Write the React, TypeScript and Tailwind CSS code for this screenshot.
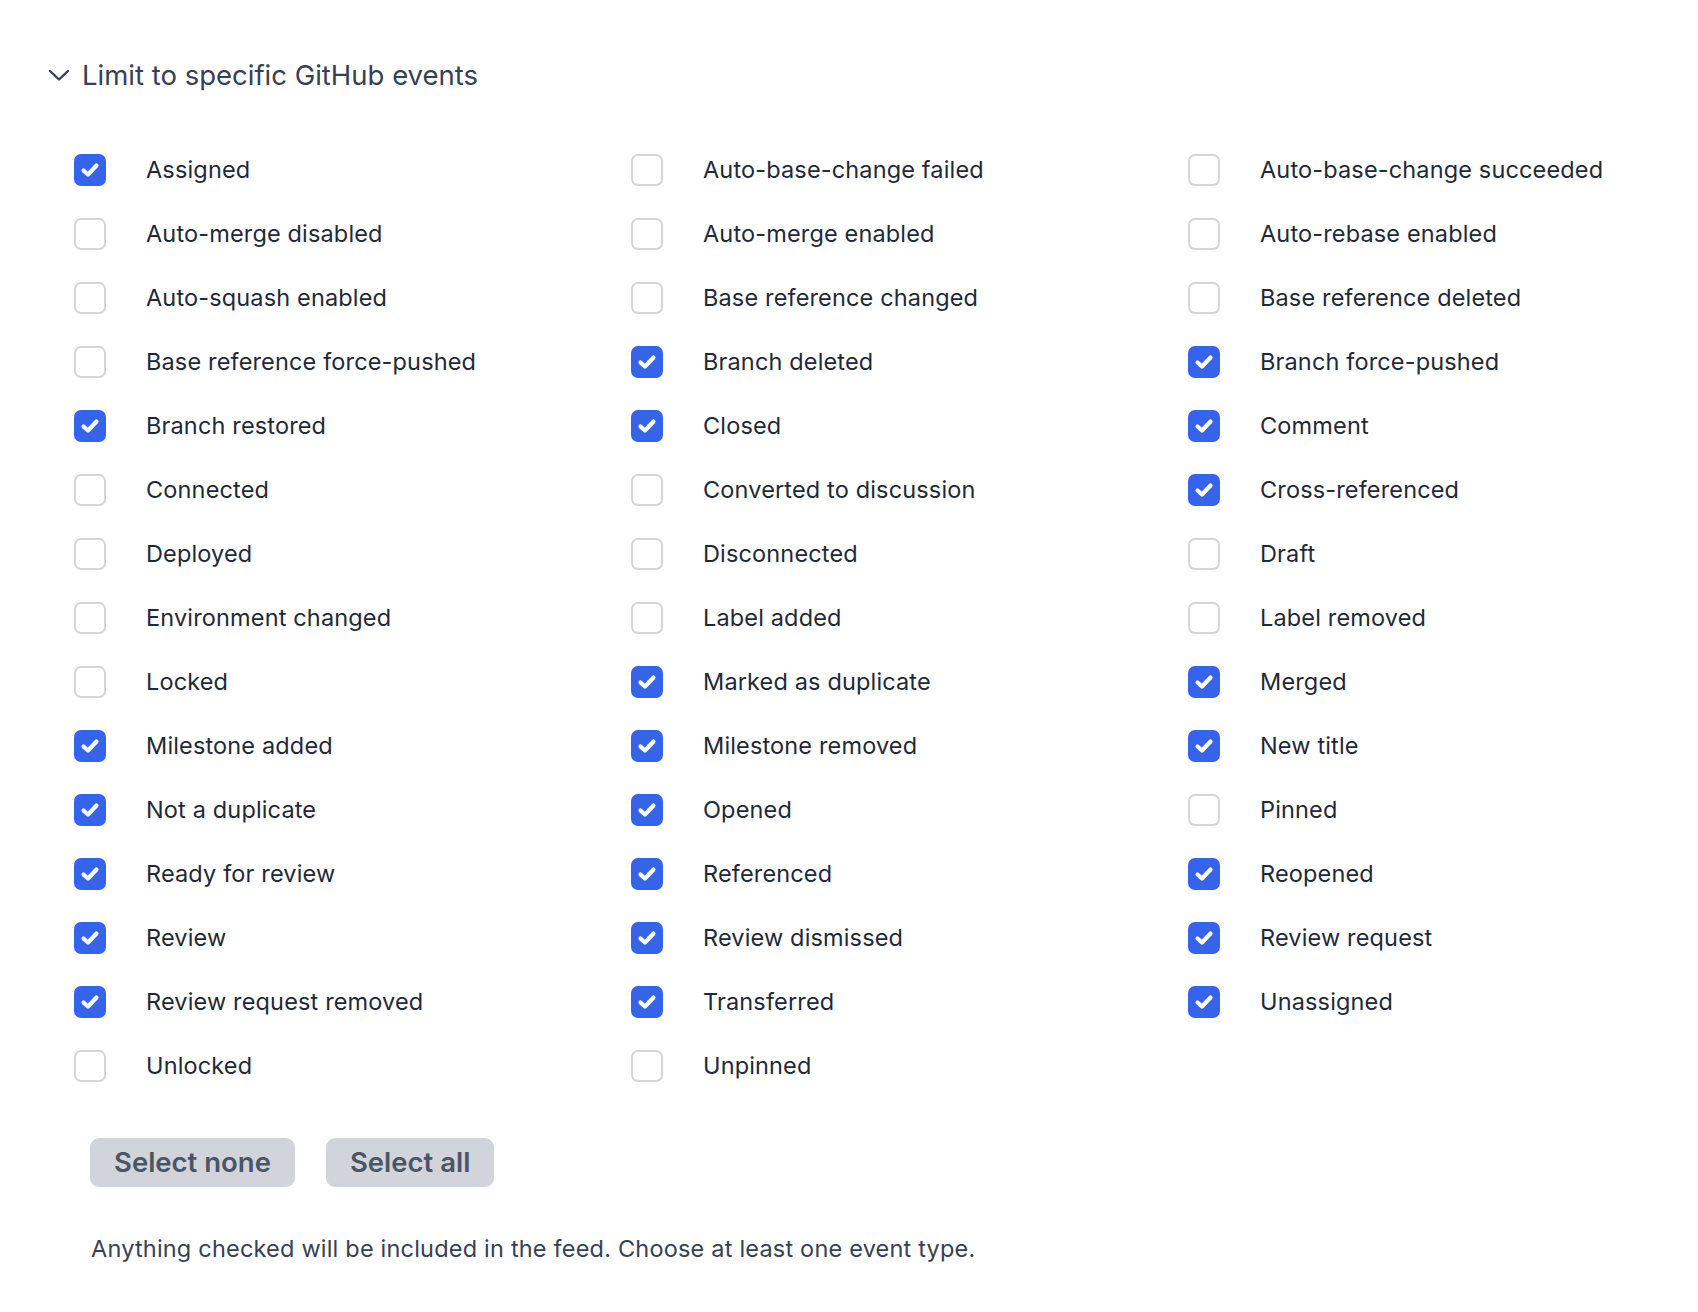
import React from "react";

const items: [string, boolean][] = [
  ["Assigned", true], ["Auto-base-change failed", false], ["Auto-base-change succeeded", false],
  ["Auto-merge disabled", false], ["Auto-merge enabled", false], ["Auto-rebase enabled", false],
  ["Auto-squash enabled", false], ["Base reference changed", false], ["Base reference deleted", false],
  ["Base reference force-pushed", false], ["Branch deleted", true], ["Branch force-pushed", true],
  ["Branch restored", true], ["Closed", true], ["Comment", true],
  ["Connected", false], ["Converted to discussion", false], ["Cross-referenced", true],
  ["Deployed", false], ["Disconnected", false], ["Draft", false],
  ["Environment changed", false], ["Label added", false], ["Label removed", false],
  ["Locked", false], ["Marked as duplicate", true], ["Merged", true],
  ["Milestone added", true], ["Milestone removed", true], ["New title", true],
  ["Not a duplicate", true], ["Opened", true], ["Pinned", false],
  ["Ready for review", true], ["Referenced", true], ["Reopened", true],
  ["Review", true], ["Review dismissed", true], ["Review request", true],
  ["Review request removed", true], ["Transferred", true], ["Unassigned", true],
  ["Unlocked", false], ["Unpinned", false],
];

function Box({ checked }: { checked: boolean }) {
  if (checked) {
    return (
      <div className="w-[32px] h-[32px] rounded-[7px] bg-[#3563e9] flex items-center justify-center shrink-0">
        <svg width="32" height="32" viewBox="0 0 32 32">
          <path d="M9.5 16.5 L14 20.5 L22.5 11.5" fill="none" stroke="white" strokeWidth="4.2" strokeLinecap="round" strokeLinejoin="round" />
        </svg>
      </div>
    );
  }
  return <div className="w-[32px] h-[32px] rounded-[7px] border-2 border-[#d4d6db] bg-white shrink-0" />;
}

export default function App() {
  return (
    <div className="min-h-[1312px] bg-white pl-[48px] pt-[57px]" style={{ fontFamily: "Inter, 'Noto Sans', sans-serif" }}>
      <div className="flex items-center h-[36px]">
        <svg width="22" height="14" viewBox="0 0 22 14" className="shrink-0">
          <path d="M2 3 L11 11.5 L20 3" fill="none" stroke="#374151" strokeWidth="2.4" strokeLinecap="round" strokeLinejoin="round" />
        </svg>
        <span className="ml-[12px] text-[27.5px] text-[#374151] leading-[36px]">Limit to specific GitHub events</span>
      </div>
      <div className="ml-[26px] mt-[45px] grid grid-cols-[557px_557px_auto]">
        {items.map(([label, checked]) => (
          <div key={label} className="h-[64px] flex items-center">
            <Box checked={checked} />
            <span className="ml-[40px] text-[23.5px] text-[#1f2937] tracking-[0.15px]">{label}</span>
          </div>
        ))}
      </div>
      <div className="ml-[42px] mt-[40px] flex gap-[31px]">
        <button className="h-[49px] px-[24px] rounded-[9px] bg-[#d1d5db] text-[#4b5563] text-[27.5px] font-semibold leading-none">Select none</button>
        <button className="h-[49px] px-[24px] rounded-[9px] bg-[#d1d5db] text-[#4b5563] text-[27.5px] font-semibold leading-none">Select all</button>
      </div>
      <p className="ml-[43px] mt-[46px] text-[23.5px] leading-[32px] text-[#374151] tracking-[0.2px]">
        Anything checked will be included in the feed. Choose at least one event type.
      </p>
    </div>
  );
}
